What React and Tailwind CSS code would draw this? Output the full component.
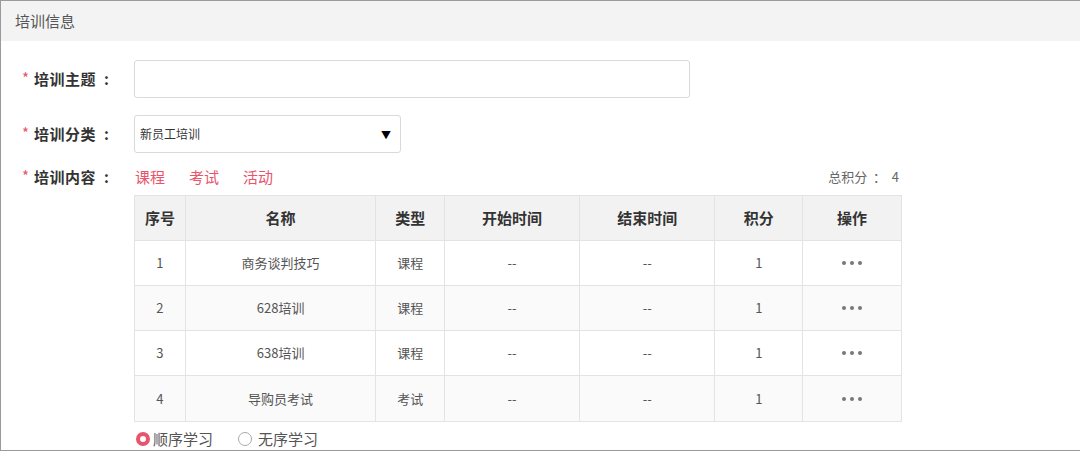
import React from 'react';

const rows = [
    { no: 1, name: '商务谈判技巧', type: '课程', score: 1 },
    { no: 2, name: '628培训', type: '课程', score: 1 },
    { no: 3, name: '638培训', type: '课程', score: 1 },
    { no: 4, name: '导购员考试', type: '考试', score: 1 },
];

const cols = [
    { title: '序号', w: 'w-[51px]' },
    { title: '名称', w: 'w-[191px]' },
    { title: '类型', w: 'w-[69px]' },
    { title: '开始时间', w: 'w-[135px]' },
    { title: '结束时间', w: 'w-[136px]' },
    { title: '积分', w: 'w-[88px]' },
    { title: '操作', w: 'w-[98px]' },
];

const Label = ({ children }) => (
    <div className="w-[133px] shrink-0 flex items-center pl-[21px]">
        <span className="text-[15px] text-[#e8546b] mr-[5px] relative top-[-1px]">*</span>
        <span className="text-[15px] font-bold text-[#333] tracking-[0.5px]">{children}</span>
        <span className="text-[15px] font-bold text-[#333] ml-[8px]">:</span>
    </div>
);

const Dots = () => (
    <div className="flex items-center justify-center gap-[4px]">
        <span className="w-[4px] h-[4px] rounded-full bg-[#777]" />
        <span className="w-[4px] h-[4px] rounded-full bg-[#777]" />
        <span className="w-[4px] h-[4px] rounded-full bg-[#777]" />
    </div>
);

export default function App() {
    return (
        <div
            className="w-[1080px] h-[451px] border-t border-l border-b border-[#9a9a9a] bg-white overflow-hidden"
            style={{ fontFamily: '"Noto Sans CJK SC", "Noto Sans", sans-serif' }}
        >
            {/* Header */}
            <div className="h-[40px] bg-[#f3f3f3] flex items-center pl-[14px] text-[15px] text-[#555]">
                培训信息
            </div>

            {/* Subject */}
            <div className="flex items-center mt-[19px]">
                <Label>培训主题</Label>
                <div className="w-[556px] h-[38px] border border-[#d9d9d9] rounded-[3px] bg-white" />
            </div>

            {/* Category */}
            <div className="flex items-center mt-[17px]">
                <Label>培训分类</Label>
                <div className="w-[267px] h-[38px] border border-[#d9d9d9] rounded-[3px] bg-white flex items-center justify-between pl-[5px] pr-[9px]">
                    <span className="text-[12px] text-[#333]">新员工培训</span>
                    <span className="text-[10px] text-black">▼</span>
                </div>
            </div>

            {/* Content */}
            <div className="flex mt-[11px]">
                <div className="h-[26px] flex items-center">
                    <Label>培训内容</Label>
                </div>
                <div className="w-[768px]">
                    <div className="h-[26px] flex items-center justify-between">
                        <div className="flex items-center gap-[24px] text-[15px] text-[#e8546b] pl-[1px]">
                            <span>课程</span>
                            <span>考试</span>
                            <span>活动</span>
                        </div>
                        <span className="text-[13px] text-[#666] pr-[3px] whitespace-pre">总积分  ：  4</span>
                    </div>

                    <div className="mt-[5px] border border-[#e3e3e3]">
                        <div className="flex h-[45px] bg-[#f2f2f2] border-b border-[#e3e3e3]">
                            {cols.map((c, i) => (
                                <div
                                    key={c.title}
                                    className={`${c.w} flex items-center justify-center text-[15px] font-bold text-[#333] ${i < cols.length - 1 ? 'border-r border-[#e3e3e3]' : ''}`}
                                >
                                    {c.title}
                                </div>
                            ))}
                        </div>
                        {rows.map((r, ri) => {
                            const cells = [r.no, r.name, r.type, '--', '--', r.score, <Dots key="d" />];
                            return (
                                <div
                                    key={r.no}
                                    className={`flex h-[45px] ${ri % 2 === 1 ? 'bg-[#fafafa]' : 'bg-white'} ${ri < rows.length - 1 ? 'border-b border-[#e3e3e3]' : ''}`}
                                >
                                    {cells.map((v, i) => (
                                        <div
                                            key={i}
                                            className={`${cols[i].w} flex items-center justify-center text-[13px] text-[#555] ${i < cols.length - 1 ? 'border-r border-[#e3e3e3]' : ''}`}
                                        >
                                            {v}
                                        </div>
                                    ))}
                                </div>
                            );
                        })}
                    </div>

                    {/* Order radios */}
                    <div className="flex items-center h-[36px] text-[15px] text-[#555] pl-[2px] -mt-[1px]">
                        <span className="w-[14px] h-[14px] rounded-full border-[4px] border-[#e8546b] bg-white mr-[3px]" />
                        <span>顺序学习</span>
                        <span className="w-[14px] h-[14px] rounded-full border border-[#aaa] bg-white ml-[25px] mr-[6px]" />
                        <span>无序学习</span>
                    </div>
                </div>
            </div>
        </div>
    );
}
